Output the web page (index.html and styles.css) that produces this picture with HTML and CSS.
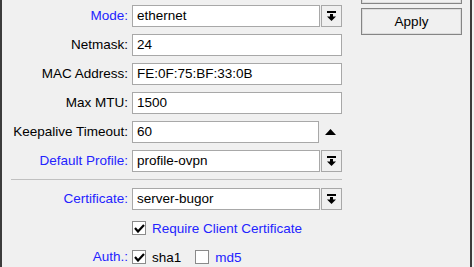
FILE: index.html
```html
<!DOCTYPE html>
<html lang="en">
<head>
<meta charset="UTF-8">
<meta name="viewport" content="width=device-width, initial-scale=1.0">
<title>OVPN Server</title>
<link rel="stylesheet" href="styles.css">
</head>
<body>
<div class="window">
    <div class="form">
        <div class="row">
            <label class="label link">Mode:</label>
            <div class="control">
                <div class="field">ethernet</div>
                <div class="drop">
                    <svg width="9" height="10" viewBox="0 0 9 10"><rect x="0" y="0" width="9" height="2"/><rect x="3" y="3" width="3" height="3"/><path d="M0 5.5h9L4.5 10z"/></svg>
                </div>
            </div>
        </div>
        <div class="row">
            <label class="label">Netmask:</label>
            <div class="control"><div class="field">24</div></div>
        </div>
        <div class="row">
            <label class="label">MAC Address:</label>
            <div class="control"><div class="field">FE:0F:75:BF:33:0B</div></div>
        </div>
        <div class="row">
            <label class="label">Max MTU:</label>
            <div class="control"><div class="field">1500</div></div>
        </div>
        <div class="row">
            <label class="label">Keepalive Timeout:</label>
            <div class="control">
                <div class="field">60</div>
                <div class="toggle">
                    <svg width="11" height="6" viewBox="0 0 11 6"><path d="M0 6L5.5 0L11 6z"/></svg>
                </div>
            </div>
        </div>
        <div class="row">
            <label class="label link">Default Profile:</label>
            <div class="control">
                <div class="field">profile-ovpn</div>
                <div class="drop">
                    <svg width="9" height="10" viewBox="0 0 9 10"><rect x="0" y="0" width="9" height="2"/><rect x="3" y="3" width="3" height="3"/><path d="M0 5.5h9L4.5 10z"/></svg>
                </div>
            </div>
        </div>

        <div class="separator"></div>

        <div class="row">
            <label class="label link">Certificate:</label>
            <div class="control">
                <div class="field">server-bugor</div>
                <div class="drop">
                    <svg width="9" height="10" viewBox="0 0 9 10"><rect x="0" y="0" width="9" height="2"/><rect x="3" y="3" width="3" height="3"/><path d="M0 5.5h9L4.5 10z"/></svg>
                </div>
            </div>
        </div>
        <div class="row">
            <span class="label"></span>
            <div class="control">
                <span class="check on"><svg width="11" height="9" viewBox="0 0 11 9"><path d="M1 4L4 7.5L10 1" fill="none" stroke="#000" stroke-width="2.2"/></svg></span>
                <span class="check-text link">Require Client Certificate</span>
            </div>
        </div>
        <div class="row auth">
            <label class="label link">Auth.:</label>
            <div class="control">
                <span class="check on"><svg width="11" height="9" viewBox="0 0 11 9"><path d="M1 4L4 7.5L10 1" fill="none" stroke="#000" stroke-width="2.2"/></svg></span>
                <span class="check-text">sha1</span>
                <span class="check second"></span>
                <span class="check-text link">md5</span>
            </div>
        </div>
    </div>

    <div class="side">
        <button class="btn top"></button>
        <button class="btn">Apply</button>
    </div>
</div>
</body>
</html>
```

FILE: styles.css
```css
html, body {
    margin: 0;
    padding: 0;
    background-color: #f0f0f0;
    font-family: "Liberation Sans", Arial, sans-serif;
    font-size: 13.5px;
    color: #000;
    overflow: hidden;
}
.window {
    display: flex;
    width: 472px;
    height: 267px;
    box-sizing: border-box;
    border-left: 2px solid #3c3c3c;
    border-right: 2px solid #3c3c3c;
    overflow: hidden;
}
.form {
    width: 340px;
    padding-top: 5px;
}
.row {
    display: grid;
    grid-template-columns: 126px 210px;
    column-gap: 4px;
    height: 22px;
    margin-bottom: 7px;
}
.row.auth {
    margin-top: 1px;
}
.label {
    text-align: right;
    line-height: 22px;
    white-space: nowrap;
}
.link {
    color: #2323ff;
}
.control {
    display: flex;
    align-items: center;
    height: 22px;
}
.field {
    flex: 1;
    height: 22px;
    line-height: 20px;
    box-sizing: border-box;
    padding-left: 4px;
    background-color: #fff;
    border: 1px solid #a8a8a8;
    white-space: nowrap;
    overflow: hidden;
}
.drop {
    width: 21px;
    height: 22px;
    margin-left: 1px;
    box-sizing: border-box;
    border: 1px solid #a8a8a8;
    background-color: #f0f0f0;
    display: flex;
    align-items: center;
    justify-content: center;
}
.drop svg {
    margin-top: -1px;
}
.toggle {
    width: 23px;
    height: 22px;
    display: flex;
    align-items: center;
    justify-content: center;
}
.separator {
    height: 1px;
    background-color: #c0c0c0;
    margin: 2px 0 8px 9px;
    width: 331px;
}
.check {
    width: 14px;
    height: 14px;
    box-sizing: border-box;
    border: 1px solid #8a8a8a;
    background-color: #fff;
    display: flex;
    align-items: center;
    justify-content: center;
}
.check.second {
    margin-left: 14px;
}
.check-text {
    margin-left: 6px;
    white-space: nowrap;
}
.side {
    display: flex;
    flex-direction: column;
    gap: 4px;
    padding-left: 19px;
    margin-top: -23px;
}
.btn {
    width: 101px;
    height: 27px;
    font-family: "Liberation Sans", Arial, sans-serif;
    font-size: 13.5px;
    color: #000;
    background-color: #f0f0f0;
    border: 1px solid #858585;
    box-shadow: inset 0 0 0 1px #dcdcdc;
    padding: 0;
}
```
